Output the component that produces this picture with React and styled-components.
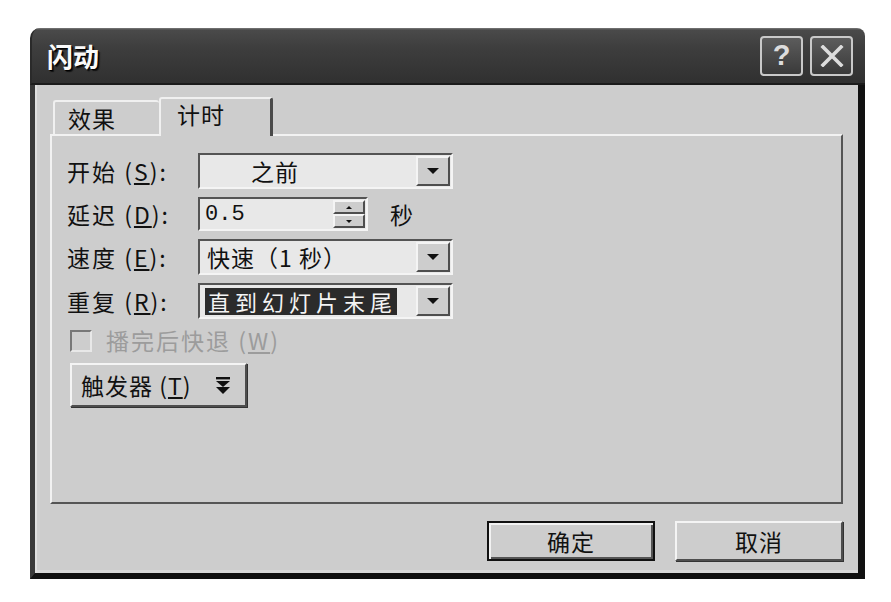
import React from 'react';
import styled, { createGlobalStyle, css } from 'styled-components';

const GlobalStyle = createGlobalStyle`
  html, body { margin: 0; padding: 0; background: #fff; }
  body { font-family: "Noto Sans CJK SC", "Noto Sans", sans-serif; }
`;

const raised = css`
  border: 2px solid;
  border-color: #f4f4f4 #4e4e4e #4e4e4e #f4f4f4;
`;

const sunken = css`
  border: 2px solid;
  border-color: #545454 #f4f4f4 #f4f4f4 #545454;
`;

const Page = styled.div`
  padding: 28px 0 0 30px;
`;

const Window = styled.div`
  width: 835px;
  display: flex;
  flex-direction: column;
`;

const TitleBar = styled.div`
  height: 57px;
  box-sizing: border-box;
  border-radius: 10px 8px 0 0;
  background: linear-gradient(#7a7a7a 0, #4a4a4a 2px, #3e3e3e 35%, #303030 100%);
  border-bottom: 2px solid #1b1b1b;
  border-left: 2px solid #2a2a2a;
  display: flex;
  align-items: center;
  justify-content: space-between;
  padding: 0 12px 0 15px;
`;

const Title = styled.div`
  color: #fafafa;
  font-size: 26px;
  font-weight: 700;
  line-height: 1;
  text-shadow: 1px 1px 0 #000, 2px 2px 1px #111;
`;

const TitleButtons = styled.div`
  display: flex;
  gap: 7px;
`;

const TitleButton = styled.div`
  width: 43px;
  height: 40px;
  box-sizing: border-box;
  border: 2px solid #c9c9c9;
  border-radius: 4px;
  background: linear-gradient(#5c5c5c, #3a3a3a);
  display: flex;
  align-items: center;
  justify-content: center;
  color: #dcdcdc;
  font-family: "Liberation Sans", sans-serif;
  font-weight: 700;
  font-size: 29px;
  line-height: 1;
`;

const Body = styled.div`
  background: #cdcdcd;
  border-left: 5px solid #383838;
  border-right: 7px solid #111;
  border-bottom: 6px solid #111;
  padding: 12px 15px 12px 15px;
  display: flex;
  flex-direction: column;
  box-shadow: inset 2px 0 0 #dedede, inset 0 -3px 0 #d9d9d9;
`;

const TabStrip = styled.div`
  display: flex;
  align-items: flex-end;
  height: 37px;
  padding-left: 3px;
  position: relative;
  z-index: 1;
`;

const Tab = styled.div`
  box-sizing: border-box;
  height: ${p => (p.$active ? '39px' : '34px')};
  width: ${p => (p.$active ? '114px' : '106px')};
  margin-bottom: ${p => (p.$active ? '-2px' : '0')};
  padding-left: ${p => (p.$active ? '16px' : '13px')};
  padding-top: ${p => (p.$active ? '2px' : '3px')};
  background: #cdcdcd;
  border-top: 2px solid #f0f0f0;
  border-left: 2px solid #f0f0f0;
  border-right: ${p => (p.$active ? '3px solid #4a4a4a' : '0')};
  border-radius: 3px 3px 0 0;
  font-size: 23px;
  letter-spacing: 1px;
  line-height: 1.2;
  color: #111;
`;

const Panel = styled.div`
  height: 370px;
  box-sizing: border-box;
  border: 2px solid;
  border-color: #f2f2f2 #555 #555 #f2f2f2;
  padding: 17px 0 0 15px;
`;

const Form = styled.div`
  display: grid;
  grid-template-columns: 131px auto;
  grid-template-rows: 36px 34px 36px 36px;
  row-gap: 8px;
  align-items: center;
  justify-content: start;
`;

const Label = styled.div`
  font-size: 23px;
  letter-spacing: 2px;
  line-height: 1;
  color: ${p => (p.$disabled ? '#9c9c9c' : '#111')};
  white-space: nowrap;
`;

const Key = styled.span`
  text-decoration: underline;
  text-underline-offset: 2px;
`;

const Combo = styled.div`
  ${sunken};
  box-sizing: border-box;
  width: ${p => p.$width || 255}px;
  height: 100%;
  background: #e8e8e8;
  display: flex;
  align-items: stretch;
  padding: 1px;
`;

const ComboText = styled.div`
  flex: 1;
  display: flex;
  align-items: center;
  padding-left: ${p => p.$indent || 6}px;
  font-size: 23px;
  letter-spacing: 1px;
  color: #111;
  white-space: nowrap;
`;

const Selected = styled.span`
  background: #2b2b2b;
  color: #f4f4f4;
  font-size: 22px;
  letter-spacing: 5px;
  line-height: 27px;
  padding: 0 0 0 3px;
  margin-left: -2px;
`;

const DropButton = styled.div`
  ${raised};
  width: 34px;
  box-sizing: border-box;
  background: #cdcdcd;
  display: flex;
  align-items: center;
  justify-content: center;
`;

const Arrow = styled.span`
  width: 0;
  height: 0;
  border-left: ${p => p.$size || 6}px solid transparent;
  border-right: ${p => p.$size || 6}px solid transparent;
  ${p => (p.$up ? css`border-bottom: ${p.$size || 6}px solid #111;` : css`border-top: ${p.$size || 6}px solid #111;`)}
`;

const Inline = styled.div`
  display: flex;
  align-items: center;
  height: 100%;
`;

const MonoText = styled.div`
  flex: 1;
  display: flex;
  align-items: center;
  padding-left: 4px;
  font-family: "Liberation Mono", monospace;
  font-size: 22px;
  color: #111;
`;

const SpinButtons = styled.div`
  width: 32px;
  display: flex;
  flex-direction: column;
`;

const SpinHalf = styled.div`
  ${raised};
  flex: 1;
  background: #cdcdcd;
  display: flex;
  align-items: center;
  justify-content: center;
`;

const Unit = styled.span`
  margin-left: 22px;
  font-size: 23px;
  color: #111;
`;

const CheckRow = styled.div`
  display: flex;
  align-items: center;
  height: 23px;
  margin: 10px 0 0 3px;
`;

const CheckBox = styled.div`
  ${sunken};
  border-color: #777 #e8e8e8 #e8e8e8 #777;
  width: 22px;
  height: 22px;
  box-sizing: border-box;
  background: #cdcdcd;
  margin-right: 14px;
`;

const TriggerButton = styled.div`
  ${raised};
  box-sizing: border-box;
  width: 177px;
  height: 44px;
  margin: 11px 0 0 3px;
  display: flex;
  align-items: center;
  padding: 0 14px 0 9px;
  font-size: 23px;
  letter-spacing: 1px;
  color: #111;
  background: #cdcdcd;
  box-shadow: 1px 1px 0 #333;
`;

const TriggerIcon = styled.svg`
  margin-left: auto;
`;

const Footer = styled.div`
  margin-top: 17px;
  display: flex;
  justify-content: flex-end;
  gap: 20px;
`;

const DialogButton = styled.div`
  box-sizing: border-box;
  width: 168px;
  height: 40px;
  display: flex;
  align-items: center;
  justify-content: center;
  font-size: 23px;
  letter-spacing: 1px;
  color: #111;
  background: #cdcdcd;
  ${p =>
    p.$default
      ? css`
          border: 2px solid #111;
          box-shadow: inset 2px 2px 0 #f2f2f2, inset -2px -2px 0 #555;
        `
      : css`
          ${raised};
          box-shadow: 1px 1px 0 #333;
        `}
`;

export default function App() {
  return (
    <>
      <GlobalStyle />
      <Page>
        <Window>
          <TitleBar>
            <Title>闪动</Title>
            <TitleButtons>
              <TitleButton>?</TitleButton>
              <TitleButton>
                <svg width="24" height="22" viewBox="0 0 24 22">
                  <path d="M3 2 L21 20 M21 2 L3 20" stroke="#dcdcdc" strokeWidth="3.6" strokeLinecap="square" />
                </svg>
              </TitleButton>
            </TitleButtons>
          </TitleBar>
          <Body>
            <TabStrip>
              <Tab>效果</Tab>
              <Tab $active>计时</Tab>
            </TabStrip>
            <Panel>
              <Form>
                <Label>开始 (<Key>S</Key>):</Label>
                <Combo>
                  <ComboText $indent={50}>之前</ComboText>
                  <DropButton><Arrow /></DropButton>
                </Combo>

                <Label>延迟 (<Key>D</Key>):</Label>
                <Inline>
                  <Combo $width={170}>
                    <MonoText>0.5</MonoText>
                    <SpinButtons>
                      <SpinHalf><Arrow $up $size={3} /></SpinHalf>
                      <SpinHalf><Arrow $size={3} /></SpinHalf>
                    </SpinButtons>
                  </Combo>
                  <Unit>秒</Unit>
                </Inline>

                <Label>速度 (<Key>E</Key>):</Label>
                <Combo>
                  <ComboText $indent={6}>快速（1 秒）</ComboText>
                  <DropButton><Arrow /></DropButton>
                </Combo>

                <Label>重复 (<Key>R</Key>):</Label>
                <Combo>
                  <ComboText $indent={6}><Selected>直到幻灯片末尾</Selected></ComboText>
                  <DropButton><Arrow /></DropButton>
                </Combo>
              </Form>

              <CheckRow>
                <CheckBox />
                <Label $disabled>播完后快退 (<Key>W</Key>)</Label>
              </CheckRow>

              <TriggerButton>
                触发器 (<Key>T</Key>)
                <TriggerIcon width="16" height="17" viewBox="0 0 16 17">
                  <rect x="1" y="0" width="14" height="2.4" fill="#111" />
                  <path d="M1 4 L15 4 L8 10 Z" fill="#111" />
                  <path d="M1 10 L15 10 L8 17 Z" fill="#111" />
                </TriggerIcon>
              </TriggerButton>
            </Panel>
            <Footer>
              <DialogButton $default>确定</DialogButton>
              <DialogButton>取消</DialogButton>
            </Footer>
          </Body>
        </Window>
      </Page>
    </>
  );
}
